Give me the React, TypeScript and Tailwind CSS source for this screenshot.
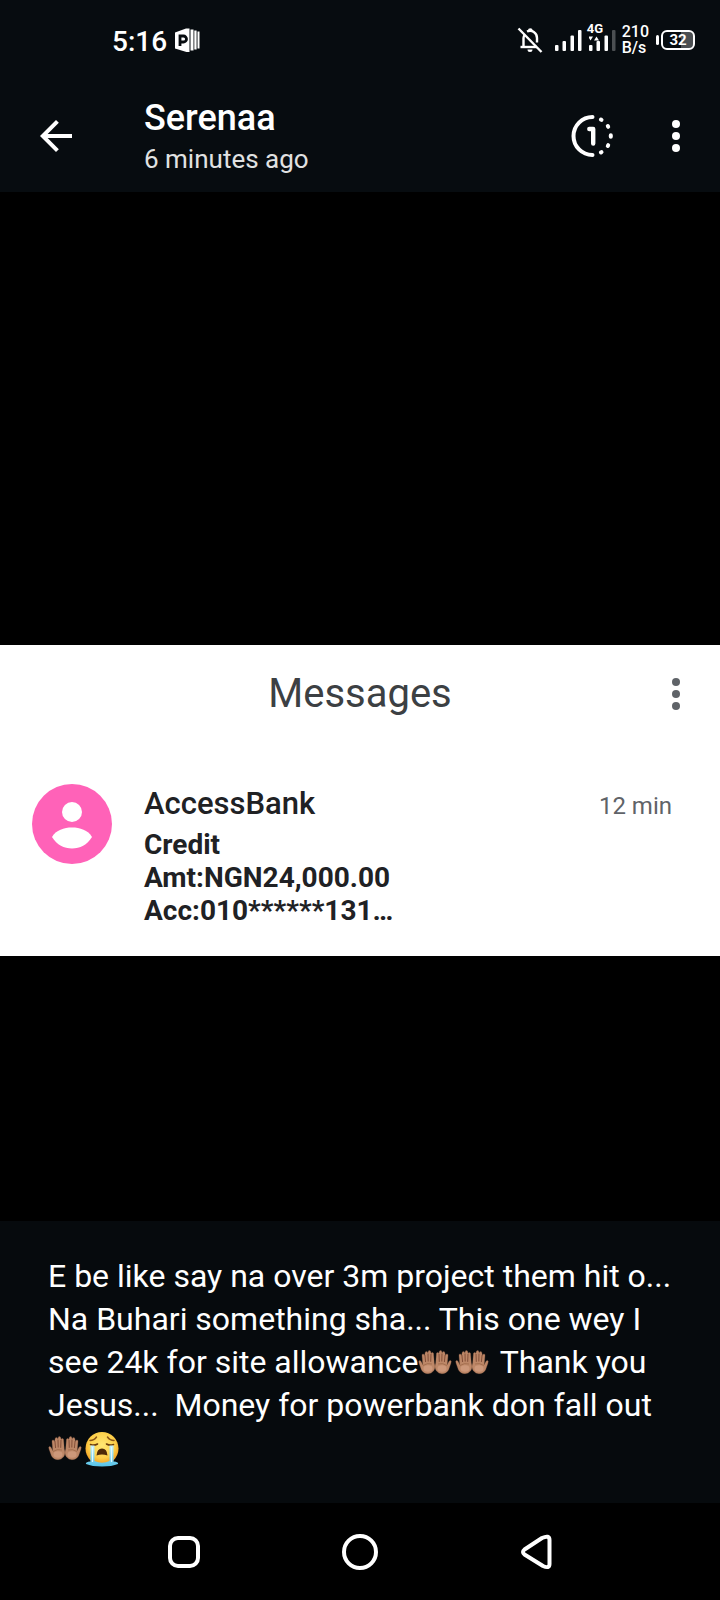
import React from "react";

function AppBadgeIcon() {
  return (
    <svg width="26" height="26" viewBox="0 0 26 26" aria-hidden="true">
      <path d="M0 5.500 L11 1.500 h3.500 v23.500 h-3 L0 21.500 Z" fill="#fff" />
      <path d="M5 19 V9 h3.500 a2.800 2.800 0 0 1 0 6 H5" fill="none" stroke="#070c10" strokeWidth="2.8" />
      <path d="M15.500 2.500 h3 v21 h-3 Z M19.300 3.500 h2.300 v19 h-2.300 Z M22.500 4.500 h2 v17 h-2 Z" fill="#fff" />
    </svg>
  );
}

function MutedBellIcon() {
  return (
    <svg width="26" height="28" viewBox="0 0 26 28" fill="none" stroke="#fff" aria-label="Notifications off" role="img">
      <path d="M6.500 20.500 V12 a7 7 0 0 1 1.200 -3.400 M10 5.500 a7 7 0 0 1 10 6.500 v4.500" strokeWidth="2.4" />
      <path d="M3.500 21 H20" strokeWidth="2.4" />
      <path d="M11 4.500 a2.300 2.300 0 0 1 4.600 0 Z M10.500 23.500 h5 a2.500 2.500 0 0 1 -5 0 Z" fill="#fff" stroke="none" />
      <path d="M1.500 2.500 L24.500 26" strokeWidth="2.4" />
    </svg>
  );
}

function SignalIcon({ weak = false }: { weak?: boolean }) {
  return (
    <svg width="27" height="22" viewBox="0 0 27 22" fill="#fff" aria-hidden="true">
      <rect x="0" y="16" width="3.500" height="6" rx="1" />
      <rect x="7.500" y="12" width="3.500" height="10" rx="1" />
      <rect x="15.500" y="6.500" width="3.500" height="15.500" rx="1" />
      <rect x="23" y="1" width="3.500" height="21" rx="1" fill={weak ? "#4b4f52" : "#fff"} />
      {weak && <path d="M-1 7.500 h5 l-2.500 4 Z M5 11.500 h5 l-2.500 -4 Z" />}
    </svg>
  );
}

function Battery() {
  return (
    <div className="flex items-center gap-0.5" aria-label="Battery 32 percent">
      <span className="h-2.5 w-[3px] rounded-sm bg-white" />
      <span className="flex h-5 w-[34px] items-center justify-center rounded-md border-2 border-white bg-linear-to-r from-transparent from-60% to-[#4b4f52] to-60% text-[15px] leading-none font-bold">
        32
      </span>
    </div>
  );
}

function BackArrowIcon() {
  return (
    <svg width="48" height="48" viewBox="0 0 24 24" fill="#fff" aria-hidden="true">
      <path d="M20 11H7.830l5.590-5.590L12 4l-8 8 8 8 1.410-1.410L7.830 13H20v-2z" />
    </svg>
  );
}

function ViewOnceIcon() {
  return (
    <svg width="48" height="48" viewBox="0 0 48 48" fill="none" stroke="#fff" strokeWidth="4" strokeLinecap="round" aria-hidden="true">
      <path d="M24.500 5 A19 19 0 0 0 24.500 43" />
      <path d="M21.300 17 H25.200 V31.500" strokeWidth="4.4" strokeLinejoin="round" />
      <path d="M32.900 7.500 l.6 .4 M39.800 14.100 l.4 .7 M42.800 23.300 v1.400 M40.200 33.200 l-.4 .7 M33.500 40.100 l-.6 .4" />
    </svg>
  );
}

function MoreIcon() {
  return (
    <svg width="48" height="48" viewBox="0 0 48 48" fill="currentColor" aria-hidden="true">
      <circle cx="24" cy="12" r="4" />
      <circle cx="24" cy="24" r="4" />
      <circle cx="24" cy="36" r="4" />
    </svg>
  );
}

function Hand() {
  return (
    <g>
      <path
        d="M.5 14 q-.8 -2.300 .5 -2.600 q1.200 -.2 1.900 1.500 L4.300 16 L3.500 6.500 q-.1 -1.600 1 -1.600 q1.100 0 1.500 1.500 L6.600 4 q0 -1.600 1.300 -1.600 q1.300 0 1.400 1.500 L9.700 3 q.1 -1.500 1.300 -1.400 q1.300 .1 1.300 1.600 L12.700 4.600 q.2 -1.200 1.300 -1.100 q1.200 .1 1.100 1.600 L15.800 14 Q17.500 18.500 15.200 21.800 Q13 24.700 9.500 24.700 Q5 24.700 3 21 Z"
        fill="#bd8767"
        stroke="#9a664a"
        strokeWidth=".3"
      />
      <path d="M6.400 6 L7.100 13 M9.500 4.500 L9.700 12.500 M12.500 5 L12.200 12.800" stroke="#74402c" strokeWidth=".8" fill="none" />
      <path d="M4.500 16.500 Q9 13.500 13.500 15" stroke="#94603f" strokeWidth=".6" fill="none" />
      <ellipse cx="9.500" cy="19.500" rx="4.500" ry="3.300" fill="#cd987a" />
    </g>
  );
}

function PalmsEmoji() {
  return (
    <svg width="34" height="26" viewBox="0 0 33 26" className="mr-[3px] inline-block align-[-2px]" role="img" aria-label="🤲🏽">
      <Hand />
      <g transform="translate(33 0) scale(-1 1)">
        <Hand />
      </g>
    </svg>
  );
}

function CryingEmoji() {
  return (
    <svg width="34" height="36" viewBox="0 0 34 36" className="inline-block align-[-8px]" role="img" aria-label="😭">
      <defs>
        <radialGradient id="face" cx=".5" cy=".4" r=".6">
          <stop offset="0" stopColor="#ffe774" />
          <stop offset=".65" stopColor="#fdd04a" />
          <stop offset="1" stopColor="#f29a1e" />
        </radialGradient>
        <linearGradient id="tear" x1="0" y1="0" x2="0" y2="1">
          <stop offset="0" stopColor="#c6f2fc" />
          <stop offset="1" stopColor="#55c3e8" />
        </linearGradient>
      </defs>
      <circle cx="17" cy="17.500" r="16.500" fill="url(#face)" />
      <path d="M5 9.500 Q9 9.500 11.500 6 M29 9.500 Q25 9.500 22.500 6" stroke="#8a5415" strokeWidth="1.500" fill="none" strokeLinecap="round" />
      <path d="M5.500 13.500 Q9 15 12.500 13 M28.500 13.500 Q25 15 21.500 13" stroke="#6b3c0c" strokeWidth="1.600" fill="none" strokeLinecap="round" />
      <path d="M11.500 24.500 Q12 17.500 17 17.500 Q22 17.500 22.500 24.500 Q17 22.500 11.500 24.500 Z" fill="#4e2a08" />
      <path
        d="M1 33 Q0 31 5.500 30.500 V14.500 H9.500 V30 Q17 33.500 24.500 30 V14.500 H28.500 V30.500 Q34 31 33 33 Q27 35.500 17 35.500 Q7 35.500 1 33 Z"
        fill="url(#tear)"
      />
      <path d="M7.500 16 V31 M26.500 16 V31" stroke="#e2f9ff" strokeWidth="1.200" />
    </svg>
  );
}

function StatusBar() {
  return (
    <div className="flex h-20 items-center justify-between pr-[25px] pl-28">
      <div className="flex items-center gap-2">
        <span className="pt-1 text-[28px] leading-8 font-medium">5:16</span>
        <AppBadgeIcon />
      </div>
      <div className="flex items-center">
        <MutedBellIcon />
        <div className="ml-3">
          <SignalIcon />
        </div>
        <div className="relative ml-[7px]">
          <SignalIcon weak />
          <span className="absolute -top-2 -left-0.5 text-[13px] leading-4 font-bold">4G</span>
        </div>
        <div className="mr-[7px] ml-1.5 text-[16px] leading-4 font-medium">
          210
          <br />
          B/s
        </div>
        <Battery />
      </div>
    </div>
  );
}

export default function App() {
  return (
    <div className="flex min-h-screen flex-col bg-black font-['Roboto',sans-serif] text-white">
      <div className="bg-[#070c10]">
        <StatusBar />
        <header className="flex h-28 items-center pr-5 pl-8">
          <button aria-label="Back">
            <BackArrowIcon />
          </button>
          <div className="ml-16 flex flex-1 flex-col gap-1">
            <h1 className="text-[36px] leading-[42px] font-medium">Serenaa</h1>
            <p className="text-[26px] leading-8 text-[#e1e2e2]">6 minutes ago</p>
          </div>
          <button aria-label="View once" className="mr-9">
            <ViewOnceIcon />
          </button>
          <button aria-label="More options">
            <MoreIcon />
          </button>
        </header>
      </div>

      <main className="flex flex-1 items-center pt-[187px]">
        <section className="w-full bg-white pb-[29px] text-[#202124]">
          <div className="grid grid-cols-[1fr_auto_1fr] items-center px-5 py-[25px]">
            <h2 className="col-start-2 text-[40px] leading-[48px] text-[#3c4043]">Messages</h2>
            <button aria-label="More options" className="justify-self-end text-[#5f6368]">
              <MoreIcon />
            </button>
          </div>
          <article className="flex items-start gap-8 pt-8 pr-12 pl-8">
            <svg width="80" height="80" viewBox="0 0 80 80" className="mt-[9px]" role="img" aria-label="Contact">
              <circle cx="40" cy="40" r="40" fill="#ff62b8" />
              <circle cx="40" cy="28" r="10" fill="#fff" />
              <path d="M20 53 C24 46 32 43.500 40 43.500 C48 43.500 56 46 60 53 C55 61 48 64.500 40 64.500 C32 64.500 25 61 20 53 Z" fill="#fff" />
            </svg>
            <div className="flex flex-1 flex-col gap-0.5 pt-[7px]">
              <div className="flex items-baseline justify-between">
                <h3 className="text-[31px] leading-[44px] font-medium">AccessBank</h3>
                <time className="text-[24px] leading-8 text-[#5f6368]">12 min</time>
              </div>
              <p className="text-[28px] leading-[33px] font-bold">
                Credit
                <br />
                Amt:NGN24,000.00
                <br />
                Acc:010******131…
              </p>
            </div>
          </article>
        </section>
      </main>

      <p className="bg-[#060a0d] px-12 pt-[34px] pb-[33px] text-[32px] leading-[43px] whitespace-pre-wrap">
        {"E be like say na over 3m project them hit o... Na Buhari something sha... This one wey I see 24k for site allowance"}
        <PalmsEmoji />
        <PalmsEmoji />
        {" Thank you Jesus...  Money for powerbank don fall out "}
        <PalmsEmoji />
        <CryingEmoji />
      </p>

      <nav className="flex h-[97px] items-center justify-center gap-32">
        <button aria-label="Recent apps">
          <svg width="48" height="48" viewBox="0 0 48 48" fill="none" stroke="#fff" strokeWidth="4">
            <rect x="10" y="10" width="28" height="28" rx="8" />
          </svg>
        </button>
        <button aria-label="Home">
          <svg width="48" height="48" viewBox="0 0 48 48" fill="none" stroke="#fff" strokeWidth="4">
            <circle cx="24" cy="24" r="16" />
          </svg>
        </button>
        <button aria-label="Back">
          <svg width="48" height="48" viewBox="0 0 48 48" fill="none" stroke="#fff" strokeWidth="4" strokeLinejoin="round">
            <path d="M12.500 21.500 L30 10 Q37.500 6.500 37.500 12 V36 Q37.500 41 31 38 L12.500 26.500 Q9.500 24 12.500 21.500 Z" />
          </svg>
        </button>
      </nav>
    </div>
  );
}
